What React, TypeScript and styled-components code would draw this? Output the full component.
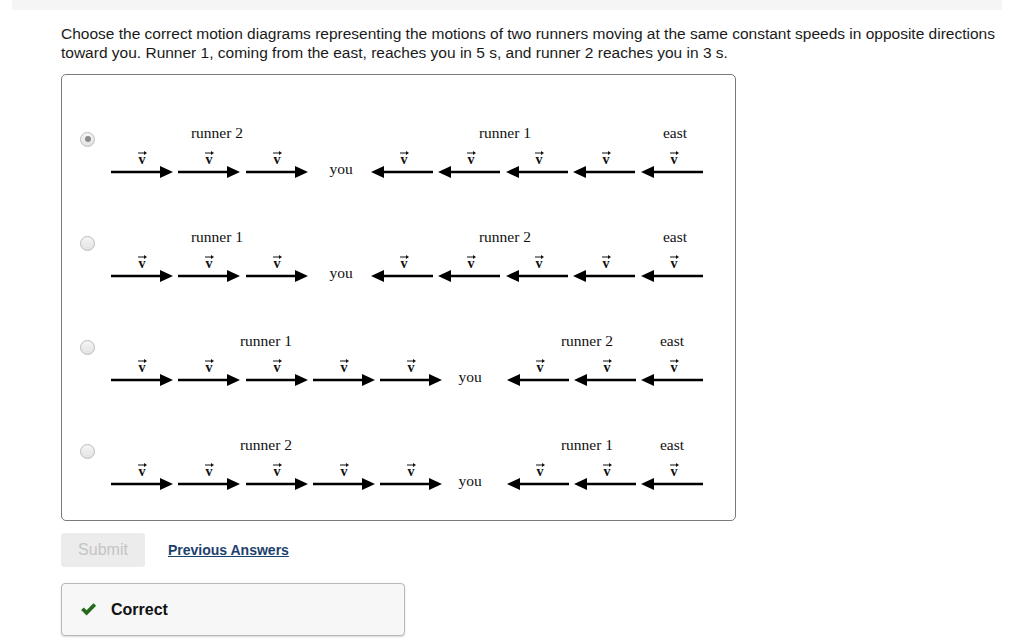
import styled, { createGlobalStyle } from 'styled-components'

const GlobalStyle = createGlobalStyle`
  html, body {
    margin: 0;
    padding: 0;
    background: #ffffff;
  }
  body {
    font-family: "Liberation Sans", Arial, sans-serif;
    color: #222;
  }
`

type Label = { text: string; x: number }
type Option = {
  right: number[]
  left: number[]
  you: number
  labels: Label[]
  checked?: boolean
}

// svg starts at page x = 100
const OX = 100
const LEN = 62

const options: Option[] = [
  {
    right: [111, 178, 246],
    left: [371, 438, 506, 573, 641],
    you: 341,
    labels: [{ text: 'runner 2', x: 217 }, { text: 'runner 1', x: 505 }, { text: 'east', x: 675 }],
    checked: true,
  },
  {
    right: [111, 178, 246],
    left: [371, 438, 506, 573, 641],
    you: 341,
    labels: [{ text: 'runner 1', x: 217 }, { text: 'runner 2', x: 505 }, { text: 'east', x: 675 }],
  },
  {
    right: [111, 178, 246, 313, 380],
    left: [507, 574, 641],
    you: 470,
    labels: [{ text: 'runner 1', x: 266 }, { text: 'runner 2', x: 587 }, { text: 'east', x: 672 }],
  },
  {
    right: [111, 178, 246, 313, 380],
    left: [507, 574, 641],
    you: 470,
    labels: [{ text: 'runner 2', x: 266 }, { text: 'runner 1', x: 587 }, { text: 'east', x: 672 }],
  },
]

function VLabel({ cx }: { cx: number }) {
  return (
    <g>
      <text x={cx} y={77} textAnchor="middle" fontFamily="'Liberation Serif', serif" fontWeight="bold" fontSize="14" fill="#111">v</text>
      <line x1={cx - 4} y1={66} x2={cx + 3} y2={66} stroke="#111" strokeWidth="1" />
      <polygon points={`${cx + 5},66 ${cx + 2},64 ${cx + 2},68`} fill="#111" />
    </g>
  )
}

function Arrow({ start, dir }: { start: number; dir: 'right' | 'left' }) {
  const x = start - OX
  const y = 85
  if (dir === 'right') {
    return (
      <g>
        <line x1={x} y1={y} x2={x + LEN - 10} y2={y} stroke="#000" strokeWidth="2.6" />
        <polygon points={`${x + LEN},${y} ${x + LEN - 13},${y - 6} ${x + LEN - 13},${y + 6}`} fill="#000" />
      </g>
    )
  }
  return (
    <g>
      <line x1={x + 10} y1={y} x2={x + LEN} y2={y} stroke="#000" strokeWidth="2.6" />
      <polygon points={`${x},${y} ${x + 13},${y - 6} ${x + 13},${y + 6}`} fill="#000" />
    </g>
  )
}

function Diagram({ opt }: { opt: Option }) {
  return (
    <DiagramSvg viewBox="0 0 620 104" width="620" height="104">
      {opt.labels.map((l, i) => (
        <text key={i} x={l.x - OX} y={51} textAnchor="middle" fontFamily="'Liberation Serif', serif" fontSize="15.5" fill="#111">
          {l.text}
        </text>
      ))}
      {opt.right.map((s, i) => (
        <g key={'r' + i}>
          <VLabel cx={s - OX + LEN / 2} />
          <Arrow start={s} dir="right" />
        </g>
      ))}
      <text x={opt.you - OX} y={87} textAnchor="middle" fontFamily="'Liberation Serif', serif" fontSize="15.5" fill="#111">you</text>
      {opt.left.map((s, i) => (
        <g key={'l' + i}>
          <VLabel cx={s - OX + LEN / 2 + 2} />
          <Arrow start={s} dir="left" />
        </g>
      ))}
    </DiagramSvg>
  )
}

export default function App() {
  return (
    <Page>
      <GlobalStyle />
      <TopBar />
      <Content>
        <Question>
          Choose the correct motion diagrams representing the motions of two runners moving at the same constant speeds in opposite directions toward you. Runner 1, coming from the east, reaches you in 5 s, and runner 2 reaches you in 3 s.
        </Question>
        <Choices>
          {options.map((o, i) => (
            <ChoiceRow key={i}>
              <Radio $checked={!!o.checked} />
              <Diagram opt={o} />
            </ChoiceRow>
          ))}
        </Choices>
        <Actions>
          <SubmitButton>Submit</SubmitButton>
          <PrevLink href="#">Previous Answers</PrevLink>
        </Actions>
        <Feedback>
          <svg width="17" height="15" viewBox="0 0 16 14">
            <path d="M1 7.5 L3.6 5 L6.2 7.6 L12.6 1 L15.2 3.5 L6.2 12.6 Z" fill="#236b1a" />
          </svg>
          <FeedbackText>Correct</FeedbackText>
        </Feedback>
      </Content>
    </Page>
  )
}

const Page = styled.div`
  width: 1024px;
  min-height: 641px;
`
const TopBar = styled.div`
  height: 10px;
  margin: 0 22px 0 12px;
  background-color: #f5f5f5;
`
const Content = styled.div`
  padding-left: 61px;
  padding-right: 20px;
`
const Question = styled.p`
  margin: 14px 0 0 0;
  font-size: 15.5px;
  line-height: 19px;
  color: #1a1a1a;
`
const Choices = styled.div`
  margin-top: 12px;
  width: 673px;
  border: 1px solid #7a7a7a;
  border-radius: 5px;
  padding: 12px 0 17px 0;
  display: flex;
  flex-direction: column;
`
const ChoiceRow = styled.div`
  display: flex;
  align-items: center;
  height: 104px;
`
const Radio = styled.span<{ $checked: boolean }>`
  width: 13px;
  height: 13px;
  margin-left: 18px;
  border-radius: 50%;
  border: 1px solid #bcbcbc;
  background: linear-gradient(#f6f6f6, #e2e2e2);
  display: flex;
  align-items: center;
  justify-content: center;
  flex-shrink: 0;
  &::after {
    content: '';
    width: 6px;
    height: 6px;
    border-radius: 50%;
    background: #8a8a8a;
    display: ${p => (p.$checked ? 'block' : 'none')};
  }
`
const DiagramSvg = styled.svg`
  margin-left: 5px;
  display: block;
  flex-shrink: 0;
`
const Actions = styled.div`
  display: flex;
  align-items: center;
  margin-top: 12px;
  gap: 23px;
`
const SubmitButton = styled.button`
  width: 84px;
  height: 34px;
  border: none;
  border-radius: 3px;
  background-color: #ececec;
  color: #c4c4c4;
  font-family: "Liberation Sans", Arial, sans-serif;
  font-size: 16px;
  padding: 0;
`
const PrevLink = styled.a`
  color: #1d3f6e;
  font-weight: bold;
  font-size: 14px;
  text-decoration: underline;
`
const Feedback = styled.div`
  margin-top: 16px;
  width: 344px;
  height: 53px;
  box-sizing: border-box;
  border: 1px solid #b8b8b8;
  border-radius: 4px;
  background-color: #f7f7f7;
  box-shadow: 0 1px 2px rgba(0, 0, 0, 0.15);
  display: flex;
  align-items: center;
  padding-left: 18px;
  gap: 14px;
`
const FeedbackText = styled.span`
  font-size: 16px;
  font-weight: bold;
  color: #111;
`
